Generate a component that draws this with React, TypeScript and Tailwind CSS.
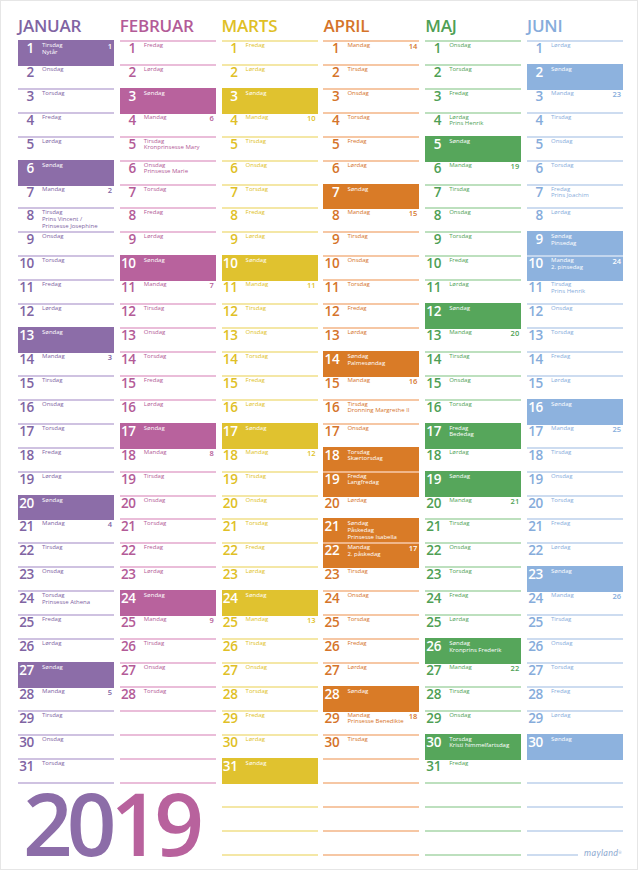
import React from 'react';

type Month = {
  name: string;
  index: number;
  days: number;
  text: string;
  fill: string;
  line: string;
  edge: string;
  seam: string;
  notes: Record<number, string[]>;
  holidays: number[];
};

const WEEKDAYS = ['Søndag', 'Mandag', 'Tirsdag', 'Onsdag', 'Torsdag', 'Fredag', 'Lørdag'];

const MONTHS: Month[] = [
  {
    name: 'JANUAR',
    index: 0,
    days: 31,
    text: 'text-[#8064a3]',
    fill: 'bg-[#8c6da8]',
    line: 'border-[#cfc2e1]',
    edge: 'border-[#8c6da8]',
    seam: 'border-[#b9a7cf]',
    notes: { 1: ['Nytår'], 8: ['Prins Vincent /', 'Prinsesse Josephine'], 24: ['Prinsesse Athena'] },
    holidays: [1]
  },
  {
    name: 'FEBRUAR',
    index: 1,
    days: 28,
    text: 'text-[#b35b97]',
    fill: 'bg-[#b8629d]',
    line: 'border-[#eabdd9]',
    edge: 'border-[#b8629d]',
    seam: 'border-[#d9a0c6]',
    notes: { 5: ['Kronprinsesse Mary'], 6: ['Prinsesse Marie'] },
    holidays: []
  },
  {
    name: 'MARTS',
    index: 2,
    days: 31,
    text: 'text-[#e0bf26]',
    fill: 'bg-[#e0c22f]',
    line: 'border-[#f4e7a6]',
    edge: 'border-[#e0c22f]',
    seam: 'border-[#f0dc84]',
    notes: {},
    holidays: []
  },
  {
    name: 'APRIL',
    index: 3,
    days: 30,
    text: 'text-[#d5742a]',
    fill: 'bg-[#d97b27]',
    line: 'border-[#f6c7a4]',
    edge: 'border-[#d97b27]',
    seam: 'border-[#f0b68a]',
    notes: {
      14: ['Palmesøndag'],
      16: ['Dronning Margrethe II'],
      18: ['Skærtorsdag'],
      19: ['Langfredag'],
      21: ['Påskedag', 'Prinsesse Isabella'],
      22: ['2. påskedag'],
      29: ['Prinsesse Benedikte']
    },
    holidays: [18, 19, 22]
  },
  {
    name: 'MAJ',
    index: 4,
    days: 31,
    text: 'text-[#4f9f55]',
    fill: 'bg-[#56a65b]',
    line: 'border-[#bde0be]',
    edge: 'border-[#56a65b]',
    seam: 'border-[#93c996]',
    notes: { 4: ['Prins Henrik'], 17: ['Bededag'], 26: ['Kronprins Frederik'], 30: ['Kristi himmelfartsdag'] },
    holidays: [17, 30]
  },
  {
    name: 'JUNI',
    index: 5,
    days: 30,
    text: 'text-[#86acdb]',
    fill: 'bg-[#8db2de]',
    line: 'border-[#cddcf0]',
    edge: 'border-[#8db2de]',
    seam: 'border-[#c3d6ee]',
    notes: { 7: ['Prins Joachim'], 9: ['Pinsedag'], 10: ['2. pinsedag'], 11: ['Prins Henrik'] },
    holidays: [10]
  }
];

const isMarked = (month: Month, day: number) =>
  day >= 1 && day <= month.days && (new Date(2019, month.index, day).getDay() === 0 || month.holidays.includes(day));

// ISO week number, shown on Mondays and on the first day of the year
const isoWeek = (date: Date) => {
  const d = new Date(Date.UTC(date.getFullYear(), date.getMonth(), date.getDate()));
  const dayNum = d.getUTCDay() || 7;
  d.setUTCDate(d.getUTCDate() + 4 - dayNum);
  const yearStart = new Date(Date.UTC(d.getUTCFullYear(), 0, 1));
  return Math.ceil(((d.getTime() - yearStart.getTime()) / 86400000 + 1) / 7);
};

const DayCell: React.FC<{ month: Month; day: number }> = ({ month, day }) => {
  const prev = isMarked(month, day - 1);
  if (day > month.days) {
    return <div className={`h-[23.93px] border-t-2 ${prev ? month.edge : month.line}`} />;
  }
  const date = new Date(2019, month.index, day);
  const wd = date.getDay();
  const marked = isMarked(month, day);
  const border = marked ? (prev ? month.seam : month.edge) : prev ? month.edge : month.line;
  const showWeek = wd === 1 || (month.index === 0 && day === 1);
  const color = marked ? 'text-white' : month.text;

  return (
    <div className={`flex h-[23.93px] border-t-2 ${border} ${marked ? month.fill : ''} ${color}`}>
      <div className="w-[16px] shrink-0 text-right text-[13.5px] leading-[13px] font-semibold tracking-[-0.3px]">
        {day}
      </div>
      <div className="ml-[8px] flex-1 text-[6px] leading-[6.6px]">
        <div>{WEEKDAYS[wd]}</div>
        {(month.notes[day] || []).map((n) => (
          <div key={n} className="whitespace-nowrap">{n}</div>
        ))}
      </div>
      {showWeek && (
        <div className="pr-[2px] text-[7.5px] leading-[8px] font-semibold">{isoWeek(date)}</div>
      )}
    </div>
  );
};

const MonthColumn: React.FC<{ month: Month }> = ({ month }) => {
  const lastMarked = isMarked(month, 31);
  return (
    <div className="flex flex-col">
      <div className={`h-[39px] pt-[16px] text-[17px] leading-[17px] font-semibold tracking-[-0.2px] ${month.text}`}>
        {month.name}
      </div>
      {Array.from({ length: 31 }, (_, i) => (
        <DayCell key={i} month={month} day={i + 1} />
      ))}
      <div className={`border-t-2 ${lastMarked ? month.edge : month.line}`} />
    </div>
  );
};

const NoteLines: React.FC<{ month: Month; logo?: boolean }> = ({ month, logo }) => (
  <div className="flex flex-col">
    <div className={`h-[24px] border-b-2 ${month.line}`} />
    <div className={`h-[24px] border-b-2 ${month.line}`} />
    {logo ? (
      <div className="flex h-[24px] items-end">
        <div className={`w-[51px] border-b-2 ${month.line}`} />
        <div className="ml-auto mr-[1px] mb-[-1px] text-[9px] leading-[9px] italic text-[#8fabd2] font-['Lato',sans-serif] tracking-[0.3px]">
          mayland<sup className="text-[4px]">®</sup>
        </div>
      </div>
    ) : (
      <div className={`h-[24px] border-b-2 ${month.line}`} />
    )}
  </div>
);

export default function App() {
  return (
    <div className="w-[638px] h-[870px] border border-[#e6e6e6] bg-white overflow-hidden font-['Open_Sans',sans-serif]">
      <div className="grid grid-cols-[repeat(6,96px)] gap-x-[5.8px] pl-[17px]">
        {MONTHS.map((m) => (
          <MonthColumn key={m.name} month={m} />
        ))}
        <div className="col-span-2 pl-[5px]">
          <div className="mt-[-5px] text-[87px] leading-none font-semibold tracking-[-6px]">
            <span className="text-[#8c6da8]">20</span>
            <span className="text-[#b8629d]">19</span>
          </div>
        </div>
        {MONTHS.slice(2).map((m) => (
          <NoteLines key={m.name} month={m} logo={m.index === 5} />
        ))}
      </div>
    </div>
  );
}
